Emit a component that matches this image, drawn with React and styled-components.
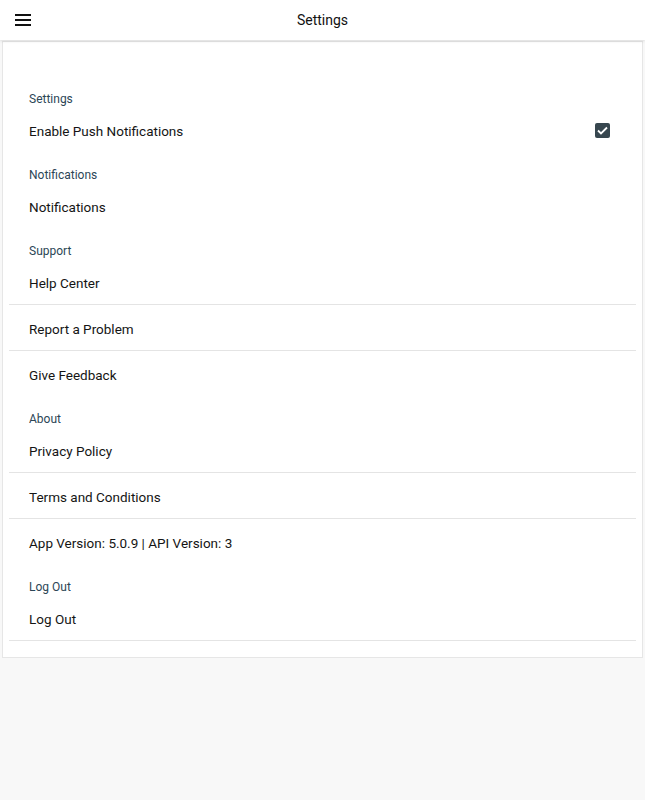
import React from "react";
import styled, { createGlobalStyle } from "styled-components";

const sections = [
  {
    title: "Settings",
    items: [{ label: "Enable Push Notifications", checkbox: true }],
  },
  { title: "Notifications", items: [{ label: "Notifications" }] },
  {
    title: "Support",
    items: [
      { label: "Help Center", divider: true },
      { label: "Report a Problem", divider: true },
      { label: "Give Feedback" },
    ],
  },
  {
    title: "About",
    items: [
      { label: "Privacy Policy", divider: true },
      { label: "Terms and Conditions", divider: true },
      { label: "App Version: 5.0.9 | API Version: 3" },
    ],
  },
  { title: "Log Out", items: [{ label: "Log Out", divider: true }] },
];

const App = () => {
  return (
    <>
      <GlobalStyle />
      <Page>
        <Header>
          <MenuButton aria-label="menu">
            <svg width="16" height="12" viewBox="0 0 16 12">
              <rect x="0" y="0" width="16" height="2" fill="#111" />
              <rect x="0" y="5" width="16" height="2" fill="#111" />
              <rect x="0" y="10" width="16" height="2" fill="#111" />
            </svg>
          </MenuButton>
          <Title>Settings</Title>
        </Header>
        <Card>
          {sections.map((section) => (
            <Section key={section.title}>
              <SectionTitle>{section.title}</SectionTitle>
              {section.items.map((item) => (
                <Row key={item.label} divider={item.divider}>
                  <RowLabel>{item.label}</RowLabel>
                  {item.checkbox && (
                    <Checkbox>
                      <svg width="11" height="9" viewBox="0 0 11 9">
                        <path
                          d="M1 4.5 L4 7.5 L10 1.5"
                          stroke="#fff"
                          strokeWidth="1.8"
                          fill="none"
                        />
                      </svg>
                    </Checkbox>
                  )}
                </Row>
              ))}
            </Section>
          ))}
        </Card>
      </Page>
    </>
  );
};

export default App;

const GlobalStyle = createGlobalStyle`
  html, body {
    margin: 0;
    padding: 0;
    background: #f8f8f8;
    font-family: Roboto, "Liberation Sans", sans-serif;
  }
`;

const Page = styled.div`
  width: 645px;
  min-height: 800px;
  background: #f8f8f8;
`;

const Header = styled.div`
  position: relative;
  z-index: 1;
  height: 40px;
  background: #fff;
  display: flex;
  align-items: center;
  justify-content: center;
  box-shadow: 0 1px 3px rgba(0, 0, 0, 0.12);
`;

const MenuButton = styled.div`
  position: absolute;
  left: 15px;
  top: 14px;
  width: 16px;
  height: 12px;
  display: flex;
`;

const Title = styled.div`
  font-size: 14px;
  color: #111;
`;

const Card = styled.div`
  margin: 1px 2px 0 2px;
  background: #fff;
  border: 1px solid #e6e6e6;
  padding: 35px 6px 16px 6px;
`;

const Section = styled.div``;

const SectionTitle = styled.div`
  padding: 15px 20px 0 20px;
  height: 15px;
  line-height: 15px;
  font-size: 12px;
  color: #2c4656;
`;

const Row = styled.div`
  height: 46px;
  box-sizing: border-box;
  display: flex;
  align-items: center;
  justify-content: space-between;
  padding: 2px 26px 0 20px;
  border-bottom: 1px solid ${(p) => (p.divider ? "#e4e4e4" : "transparent")};
`;

const RowLabel = styled.div`
  font-size: 13.5px;
  color: #151515;
`;

const Checkbox = styled.div`
  width: 15px;
  height: 15px;
  border-radius: 2px;
  background: #37474f;
  display: flex;
  align-items: center;
  justify-content: center;
`;
